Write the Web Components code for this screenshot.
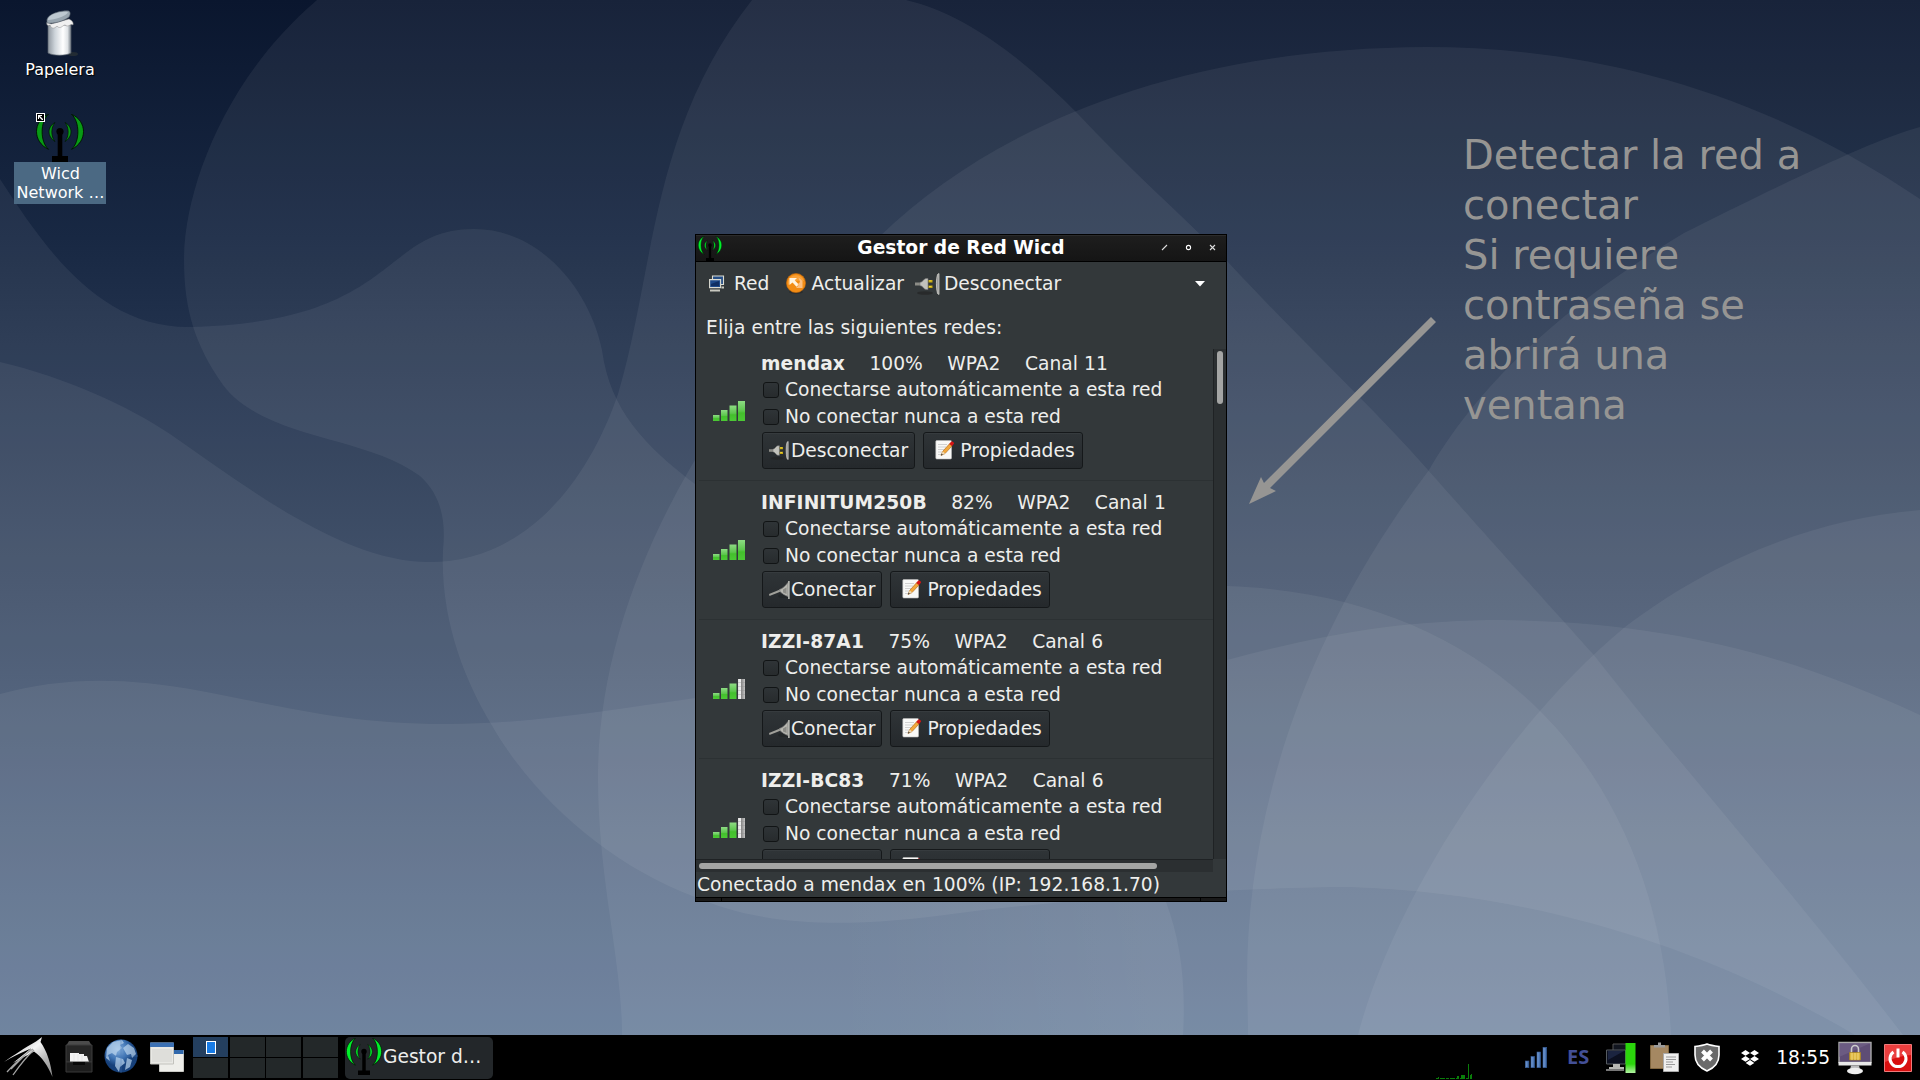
<!DOCTYPE html>
<html lang="es">
<head>
<meta charset="utf-8">
<title>Escritorio</title>
<style>
html,body{margin:0;padding:0;background:#000}
body{width:1920px;height:1080px;overflow:hidden;font-family:"DejaVu Sans",sans-serif;font-size:18.67px}
</style>
</head>
<body>
<desk-top></desk-top>
<script>
const define = (name, html, setup) => {
  const tpl = document.createElement('template');
  tpl.innerHTML = html;
  customElements.define(name, class extends HTMLElement {
    connectedCallback() {
      if (this.shadowRoot) return;
      const root = this.attachShadow({ mode: 'open' });
      root.append(tpl.content.cloneNode(true));
      if (setup) setup(this, root);
    }
  });
};

const antenna = (g) => `<path d="M12.500 .3C-3.500 7 -3.500 28 12.500 35.300C4 28 4 7.500 12.500 .3Z" fill="${g}" stroke="#010" stroke-width=".9"/>
<path d="M35.500 .3C51.500 7 51.500 28 35.500 35.300C44 28 44 7.500 35.500 .3Z" fill="${g}" stroke="#010" stroke-width=".9"/>
<path d="M19 8.500C11 13 11 22.500 19 27.500C14.800 22.500 14.800 13.500 19 8.500ZM29 8.500C37 13 37 22.500 29 27.500C33.200 22.500 33.200 13.500 29 8.500Z" fill="${g}" stroke="#010" stroke-width=".7"/>
<circle cx="24" cy="17.500" r="3.600" fill="#000"/><path d="M21.700 18h4.600v24h5.700v6H16v-6h5.700z" fill="#000"/>`;

const bars = (n) => [[0,14,6.500,6],[8,9,6.500,11],[16.500,4.500,7,15.500],[25,0,7,20]].map((b,i) =>
  `<rect x="${b[0]}" y="${b[1]}" width="${b[2]}" height="${b[3]}" fill="url(#${i<n?'g':'w'})"/>` +
  (i<n ? '' : [3,7,11,15].map(y=>`<path d="M25 ${y+.5}h7" stroke="#888" opacity=".3"/>`).join(''))).join('');
const barDefs = `<defs><linearGradient id="g" x2="0" y2="1"><stop offset="0" stop-color="#8edb84"/><stop offset=".5" stop-color="#5cc64c"/><stop offset=".6" stop-color="#43c02c"/><stop offset="1" stop-color="#4cc935"/></linearGradient>
<linearGradient id="w" x2="1" y2="0"><stop offset="0" stop-color="#ddd"/><stop offset=".35" stop-color="#f2f2f2"/><stop offset=".5" stop-color="#8c8c8c"/><stop offset="1" stop-color="#c4c4c4"/></linearGradient></defs>`;

const ICONS = {
  wicd: [48,48,antenna('#00f02a')],
  wicdDark: [48,48,antenna('#089a14')],
  trash: [34,48,`<defs><linearGradient id="a"><stop offset="0" stop-color="#8f979f"/><stop offset=".3" stop-color="#cdd4da"/><stop offset=".65" stop-color="#fff"/><stop offset=".85" stop-color="#dfe3e6"/><stop offset="1" stop-color="#767e86"/></linearGradient></defs>
    <ellipse cx="27" cy="44" rx="5" ry="2" fill="#222b33"/>
    <path d="M2 15V43C7 46 20 46 25 43V15Z" fill="url(#a)" stroke="#59636d" stroke-width=".7"/>
    <path d="M1 12C0 15 2 16 4 15C6 20 9 18 11 16C14 20 17 15 19 15C23 18 24 13 27 15C28 12 25 10 23 9L5 14Z" fill="#f0f0f0" stroke="#8b8b8b" stroke-width=".5"/>
    <path d="M1 11C0 5 14 0 23 1C25 3 24 5 23 7C18 11 8 14 1 13Z" fill="#98a5af" stroke="#59636d" stroke-width=".6"/><path d="M2 9C3 4 15 1 22 2C21 6 8 10 2 10Z" fill="#bdc8d0"/>`],
  link: [9,9,`<path d="M0 0h9v9H0z" fill="#fff"/><path d="M1 1h7v7H1z" fill="#000"/><path d="M2 2h4v1H4l3 3v1H6L3 4v2H2z" fill="#fff"/>`],
  red: [18,17,`<path d="M5.500 1h11v8.500h-11z" fill="#254e87" stroke="#dcdcd2" stroke-width="1.100"/><path d="M2.600 4.600h11v8h-11z" fill="#1e4a8a" stroke="#dcdcd2" stroke-width="1.100"/><path d="M4 9l8-3v5H4z" fill="#102f63"/><path d="M3 14.500h10v2H3zM14.500 11.500h2.500v2h-2.500z" fill="#c9c9c0"/>`],
  refresh: [20,21,`<ellipse cx="10" cy="19" rx="7" ry="1.800" fill="#222" opacity=".5"/><circle cx="10" cy="10" r="9.600" fill="#f28c14" stroke="#c8690a" stroke-width=".6"/><path d="M2 8A8.500 8.500 0 0 1 18 8Q10 6 2 12z" fill="#ffb052" opacity=".6"/><path d="M3.500 5h7.500l-2.300 2.300 4 4.200-2.200 2.200-4-4.200-3 2.500z" fill="#fff3df"/><path d="M12.500 4.500l4 3.500v7H10l2.500-2.500-1-1L14 9z" fill="#fbbf80"/>`],
  plug: [25,22,`<ellipse cx="10" cy="20" rx="8" ry="1.800" fill="#222" opacity=".6"/><path d="M0 9.500h6v3H0z" fill="#8c8c86"/><path d="M5 9.500C8 9 9 5.500 11 5.500h2v11h-2C9 16.500 8 13 5 12.500z" fill="#c2c2bc" stroke="#777" stroke-width=".6"/><path d="M13.500 7h4v2.500h-4zM13.500 12.500h4v2.500h-4z" fill="#c4a60c"/><path d="M14 7.500h2.500v.8H14zM14 13h2.500v.8H14z" fill="#f4de4f"/><path d="M24 .5v21l-1.500-1C21 15 21 6 22.500 1.500z" fill="#999" stroke="#e0e0d8" stroke-width=".7"/>`],
  plugged: [22,20,`<ellipse cx="15" cy="16" rx="6" ry="2" fill="#1c1f20" opacity=".5"/><path d="M0 14L11 9.500l1.500 1.800L.5 16z" fill="#a0a09a"/><path d="M10.500 9.500C14 8.500 16 6 19 2.500v14C16 15.500 13 13.500 11 11.500z" fill="#b7b7b0" stroke="#777" stroke-width=".7"/><path d="M14 9.500l3.500-2v6.500l-3.500-1.500z" fill="#8c8c87"/><path d="M19.900 1v18" stroke="#e3e3da" stroke-width="1.200"/>`],
  note: [20,20,`<rect x=".8" y=".5" width="15.700" height="18.500" rx="1" fill="#f9f9f7" stroke="#bbb" stroke-width=".6"/><path d="M3 4.500h9M3 7h8M3 9.500h6M3 12h4M3 14.500h3" stroke="#c0c0c0" stroke-width=".7"/><path d="M6 15.500L7.800 11.300 14.500 3.800 17 6 10 13.600z" fill="#f3a83b" stroke="#a86012" stroke-width=".6"/><path d="M6 15.500L7.800 11.300l2.200 2.300z" fill="#edd9b4"/><path d="M14.200 4l2-2.400q2.400-.6 2.900 1.900l-2 2.600z" fill="#d41414"/><path d="M6 15.500l.7-1.900 1.100 1.200z" fill="#222"/>`],
  lxde: [50,42,`<defs><linearGradient id="a" x2="1" y2="1"><stop offset="0" stop-color="#999"/><stop offset=".45" stop-color="#f5f5f5"/><stop offset=".7" stop-color="#b5b5b5"/><stop offset="1" stop-color="#888"/></linearGradient></defs><path d="M0 25C10 18 22 10 32 4.500L38 0 36.500 5C43 14 47 27 48.500 40C44 29 38 20 30 14.500C24 18 16 22 9 26L27 11.500C18 15 8 20 0 25Z" fill="url(#a)"/><path d="M29 12C20 18 11 26 3 35M30 13C23 19 16 28 9 38M27 12L7 32" stroke="#a5a5a5" stroke-width="1.300" fill="none"/>`],
  cabinet: [28,34,`<path d="M4 1h20l3 5H1z" fill="#4b4b4b"/><path d="M1 5h26v17H1z" fill="#262626" stroke="#3d3d3d"/><path d="M5 13h9v1h5v2h3l2 6H5z" fill="#f2f2f2"/><path d="M9 14v7M13 14v7M17 15v6" stroke="#ddd" stroke-width=".6"/><path d="M1 22h26v10H1z" fill="#1c1c1c" stroke="#383838"/><path d="M8 22h12v3H8z" fill="#080808"/>`],
  globe: [34,35,`<defs><radialGradient id="a" cx=".4" cy=".3"><stop offset="0" stop-color="#8bb4e0"/><stop offset=".6" stop-color="#3f74b4"/><stop offset="1" stop-color="#16407a"/></radialGradient></defs><circle cx="17" cy="17" r="16.500" fill="url(#a)"/><path d="M3 9L9 3l9-2 2 3-4 2 2 3-5 4-1 4-4-3-4 2 2 6-4-3zM19 9l5-4 6 4 2 6-4 4-1-4-4 1zM12 18l7 2 2 4-5 4-1 5-4-6zM23 19l5 2-2 7-5 3z" fill="#bcd6ee" opacity=".7"/><path d="M17 0v34M1 17h33" stroke="#4a7ab8" opacity=".4"/>`],
  windows: [34,31,`<path d="M9.500 8.500h24v21h-24z" fill="#eeeeea" stroke="#c9c9c4"/><path d="M10 8h23.500v4H10z" fill="#3168ab"/><path d="M.500 1h23v21H.5z" fill="#e9e9e5" stroke="#c2c2bd"/><path d="M0 .5h24V5H0z" fill="#3b70b3"/><path d="M2 7h20v13H2z" fill="#dededa"/>`],
  sig: [22,21,`<defs><linearGradient id="a"><stop offset="0" stop-color="#7ba3de"/><stop offset="1" stop-color="#38629f"/></linearGradient></defs><g fill="url(#a)" stroke="#355b95" stroke-width=".6"><rect x=".3" y="14" width="3.600" height="6.700"/><rect x="6" y="9.500" width="3.600" height="11.200"/><rect x="12" y="5" width="3.600" height="15.700"/><rect x="18" y=".3" width="3.700" height="20.400"/></g>`],
  net: [30,30,`<defs><linearGradient id="a" x2="0" y2="1"><stop offset="0" stop-color="#2bd50c"/><stop offset=".7" stop-color="#2bd50c"/><stop offset="1" stop-color="#b4f3a4"/></linearGradient></defs><path d="M7 1h14v16H7z" fill="#11151f" stroke="#555"/><path d="M.500 7h19v14H.5z" fill="#0c1020" stroke="#555b60"/><path d="M2 8h16l-16 9z" fill="#1b2440"/><path d="M7 21h7v3h4v3H3v-3h4z" fill="#b7b7b3"/><path d="M0 26h18v2H0z" fill="#777"/><rect x="19.500" y="0" width="10" height="30" fill="url(#a)"/>`],
  clip: [29,31,`<path d="M.500 3.500h18v23H.5z" fill="#a58862" stroke="#80663f"/><path d="M4 5.500V3h4V.500h3V3h4v2.500z" fill="#9b9b9b"/><path d="M13.500 11.500h15v18h-15z" fill="#efefef" stroke="#aaa"/><path d="M16 15h10M16 17.500h10M16 20h7M16 22.500h9M16 25h6" stroke="#999"/>`],
  shield: [26,29,`<path d="M13 1C17 2.500 21 3 25 3.500V12C25 20 20 25 13 28C6 25 1 20 1 12V3.500C5 3 9 2.500 13 1Z" fill="#6a6a6a" stroke="#fff" stroke-width="1.600"/><path d="M8.500 8l9 9M17.500 8l-9 9" stroke="#fff" stroke-width="4"/>`],
  dropbox: [18,16,`<g fill="#fff"><path d="M4.500 0L9 2.900 4.500 5.800 0 2.900zM13.500 0L18 2.900 13.500 5.800 9 2.900zM4.500 6L9 8.900 4.500 11.800 0 8.900zM13.500 6L18 8.900 13.500 11.800 9 8.900zM9 10L13.300 12.900 9 15.800 4.700 12.900z"/></g>`],
  lock: [34,34,`<path d="M1 1.500h32v20H1z" fill="#5e4d75" stroke="#aaa" stroke-width="1.400"/><path d="M1 2h32L1 16z" fill="#75658a" opacity=".6"/><path d="M.500 21h33v3.500H.5z" fill="#e8e8e8"/><path d="M13 24.500h8l1 4H12z" fill="#bbb"/><ellipse cx="17" cy="30" rx="8" ry="3.200" fill="#eee"/><path d="M13.500 12V8a3.500 3.500 0 0 1 7 0v4" fill="none" stroke="#ccc" stroke-width="1.600"/><path d="M11.500 11.500h11v7.500h-11z" fill="#dcb53e" stroke="#a9841c" stroke-width=".7"/><path d="M14 12v7M17 12v7M20 12v7" stroke="#f1d980"/>`],
  power: [28,28,`<path d="M.500.500h27v27H.5z" fill="#d80f0f" stroke="#ef7a7a"/><path d="M1 1h26v10Q14 12 1 18z" fill="#f05050" opacity=".75"/><path d="M9.500 8A8 8 0 1 0 18.500 8" fill="none" stroke="#fff" stroke-width="3"/><path d="M14 4.500v9" stroke="#fff" stroke-width="3"/>`],
  cpu: [36,15,`<path d="M0 14.500h36" stroke="#0a7d0a" stroke-dasharray="3 1 5 1"/><path d="M2 13h1v1H2zM21 12h2v2h-2zM25 11h4v3h-4zM32 0h1v14h-1zM34 11h1v3h-1zM35 10h1v4h-1z" fill="#0a7d0a"/>`],
  bars4: [32,20,barDefs+bars(4)],
  bars3: [32,20,barDefs+bars(3)],
  down: [10,6,`<path d="M0 0h10L5 5.500z" fill="#fff"/>`],
  min: [7,7,`<path d="M1 6L6 1" stroke="#ddd" stroke-width="1.100"/>`],
  max: [7,7,`<circle cx="3.500" cy="3.500" r="2.100" fill="none" stroke="#fff" stroke-width="1.100"/>`],
  close: [7,7,`<path d="M1 1l5 5M6 1L1 6" stroke="#ddd" stroke-width="1.100"/>`],
};

define('ui-icon', `<style>:host{display:block;flex:none}svg{display:block}</style>`, (el, root) => {
  const [w, h, body] = ICONS[el.getAttribute('name')];
  const W = el.getAttribute('w') || w, H = el.getAttribute('h') || h;
  root.innerHTML += `<svg width="${W}" height="${H}" viewBox="0 0 ${w} ${h}" preserveAspectRatio="none">${body}</svg>`;
});

define('wall-paper', `<style>:host{display:block;width:1920px;height:1035px;overflow:hidden}svg{display:block}</style>
<svg width="1920" height="1080" viewBox="0 0 1920 1080"><defs>
<linearGradient id="bg" x2="0" y2="1"><stop offset="0" stop-color="#0a162e"/><stop offset=".22" stop-color="#182843"/><stop offset=".32" stop-color="#22324d"/><stop offset=".56" stop-color="#374863"/><stop offset=".83" stop-color="#4d6281"/><stop offset=".96" stop-color="#556e8f"/><stop offset="1" stop-color="#567092"/></linearGradient>
<linearGradient id="fade" gradientUnits="userSpaceOnUse" x1="830" x2="1150" y1="0" y2="0"><stop offset="0" stop-color="#fff" stop-opacity="0"/><stop offset="1" stop-color="#fff"/></linearGradient></defs>
<rect width="1920" height="1080" fill="url(#bg)"/>
<g fill="#fff" fill-opacity=".058">
<path d="M0 179C46 250 100 328 190 327C400 322 380 229 474 229C540 229 590 290 602 350C610 410 645 446 695 484C860 600 1000 585 1227 586C1500 595 1660 780 1671 1035V1080H0Z"/>
<path d="M317 0C225 78 184 190 184 260C184 310 195 345 223 385C265 440 365 435 420 476C441 495 446 520 443 550C440 620 465 680 491 724C535 800 610 865 695 897C760 925 840 930 960 913C1060 900 1240 887 1350 887C1540 893 1710 950 1855 1035H1920V0Z"/>
<path d="M0 694C60 678 120 676 201 691C290 708 350 724 446 724C530 724 610 710 695 698C900 670 1060 700 1227 660C1320 635 1400 620 1503 620C1680 622 1800 660 1920 715V1080H0Z"/>
<path d="M0 362C65 377 130 407 170 434C250 490 345 562 429 562C520 562 585 490 618 394C655 270 650 130 752 0H906C970 15 1030 65 1078 114C1130 170 1180 213 1228 262C1300 340 1370 404 1428 470C1530 585 1545 600 1593 654C1680 765 1800 900 1903 1035V1080H0Z"/>
<path d="M1920 199C1760 90 1590 47 1426 47C1190 48 1000 120 880 236C750 350 598 560 598 777C598 880 622 960 622 1035V1080H1920Z"/>
<path d="M1920 127C1870 140 1750 200 1684 233C1540 320 1470 400 1429 470C1300 640 1247 820 1247 980L1249 1080H1920Z"/>
<path d="M1920 510C1800 520 1700 570 1625 627C1500 730 1390 910 1358 1035L1348 1080H1920Z"/>
<path d="M830 902H1166C1180 940 1186 980 1183 1035V1080H830Z" fill="url(#fade)"/>
</g></svg>`);

define('desk-icon', `<style>
:host{display:flex;flex-direction:column;align-items:center;font-size:16px;line-height:19px;color:#fff;text-align:center;width:92px}
.pic{position:relative}
.pic ui-icon.l{position:absolute;left:0;top:-1px}
.label{white-space:pre-line;text-shadow:1px 1px 1px #000;padding-top:2px}
:host([icon=trash]) .pic{margin-left:5px}
:host([selected]) .label{background:#4b6983;width:92px;height:42px;box-sizing:border-box;padding:2px 0 0 1px;text-shadow:none}
</style><div class="pic"></div><div class="label"><slot></slot></div>`, (el, root) => {
  root.querySelector('.pic').innerHTML = `<ui-icon name="${el.getAttribute('icon')}"></ui-icon>` + (el.hasAttribute('selected') ? '<ui-icon class="l" name="link"></ui-icon>' : '');
});

define('gtk-button', `<style>
:host{display:flex;align-items:center;box-sizing:border-box;height:37px;border:1px solid #15181a;border-radius:3px;background:linear-gradient(#2f3437,#25292c);padding:0 6px;line-height:22px;white-space:nowrap;box-shadow:inset 0 1px 0 #363b3e}
:host([wide]){padding:0 7px 0 11px}
</style><slot name="icon"></slot><slot></slot>`);

define('gtk-check', `<style>
:host{display:flex;align-items:center;gap:6px;height:26px;line-height:22px;white-space:nowrap;padding-left:1px}
i{width:14px;height:14px;border:1px solid #111415;border-radius:3px;background:linear-gradient(#2f3437,#272b2d)}
</style><i></i><span><slot></slot></span>`);

define('network-row', `<style>
:host{display:grid;grid-template-columns:49px 1fr;height:139px;box-sizing:border-box;border-bottom:1px solid #2c3133;margin-left:3px;padding:11px 0 0 14px;flex:none}
.sig{padding-top:48px}
.col{display:flex;flex-direction:column}
.name{height:22px;line-height:22px;white-space:pre;margin-left:-1px;word-spacing:.2px}
.name b{letter-spacing:.1px}
.checks{display:grid;gap:1px;margin-top:2px}
.btns{display:flex;gap:8px;margin-top:2px}
:host([below-fold]) .btns span{visibility:hidden}
</style><div class="sig"></div><div class="col"><div class="name"></div>
<div class="checks"><gtk-check>Conectarse automáticamente a esta red</gtk-check><gtk-check>No conectar nunca a esta red</gtk-check></div>
<div class="btns"></div></div>`, (el, root) => {
  const a = n => el.getAttribute(n);
  root.querySelector('.sig').innerHTML = `<ui-icon name="bars${a('bars')}"></ui-icon>`;
  root.querySelector('.name').innerHTML = `<b>${a('ssid')}</b>    ${a('level')}    WPA2    ${a('channel')}`;
  const on = el.hasAttribute('connected');
  root.querySelector('.btns').innerHTML = `<gtk-button><ui-icon slot="icon" name="${on?'plug':'plugged'}" w="${on?20:22}" h="${on?19:20}" style="margin-right:${on?2:0}px"></ui-icon><span>${on?'Desconectar':'Conectar'}</span></gtk-button>
  <gtk-button wide><ui-icon slot="icon" name="note" w="20" h="20" style="margin:-1px 5px 0 0"></ui-icon><span>Propiedades</span></gtk-button>`;
});

define('wicd-window', `<style>
:host{display:flex;flex-direction:column;box-sizing:border-box;width:532px;height:668px;border:1px solid #000;background:#33383a;color:#eeeeec;line-height:22px}
header{display:grid;grid-template-columns:130px 1fr 130px;height:27px;box-sizing:border-box;background:linear-gradient(#1e1e1e,#151515);border-bottom:1px solid #000;color:#fff;box-shadow:inset 0 1px 0 #2b2b2b}
header b{text-align:center;line-height:26px;white-space:nowrap}
header .c{display:flex;justify-content:flex-end;gap:17px;align-items:center;padding:0 10px 1px 0}
header ui-icon[name=wicd]{padding:1px 0 0 2px}
.tools{display:flex;align-items:center;height:43px;padding:0 21px 0 12px;white-space:nowrap}
.tools span{display:flex;align-items:center}
.hint{height:44px;padding:12px 0 0 10px;box-sizing:border-box;letter-spacing:.14px}
.mid{display:flex;height:510px}
.list{width:517px;height:510px;overflow:hidden;display:flex;flex-direction:column}
.list network-row:first-child{margin-top:-7px}
.v{flex:1;box-sizing:border-box;border-left:1px solid #1f2224;background:#2b2f31;padding:2px 0 0 3px}
.v i{display:block;width:6px;height:53px;border-radius:3px;background:#a4a5a4}
.h{width:517px;height:13px;box-sizing:border-box;border-top:1px solid #1f2224;background:#2b2f31;padding:3px 0 0 3px}
.h i{display:block;width:458px;height:6px;border-radius:3px;background:#a4a5a4}
.status{height:25px;padding-left:1px;line-height:25px;white-space:nowrap;letter-spacing:.03px}
footer{flex:1;display:grid;grid-template-columns:25px 1fr 25px;gap:1px;background:#000;border-top:1px solid #000}
footer i{background:#191919}
</style>
<header><ui-icon name="wicd" w="24" h="25"></ui-icon><b>Gestor de Red Wicd</b><div class="c"><ui-icon name="min"></ui-icon><ui-icon name="max"></ui-icon><ui-icon name="close"></ui-icon></div></header>
<div class="tools"><span><ui-icon name="red" style="margin:0 9px 0 -1px"></ui-icon>Red</span>
<span style="margin-left:17px"><ui-icon name="refresh" style="margin-right:5px"></ui-icon>Actualizar</span>
<span style="margin-left:11px"><ui-icon name="plug" style="margin-right:4px"></ui-icon>Desconectar</span>
<ui-icon name="down" style="margin-left:auto"></ui-icon></div>
<div class="hint">Elija entre las siguientes redes:</div>
<div class="mid"><div class="list">
<network-row bars="4" ssid="mendax" level="100%" channel="Canal 11" connected></network-row>
<network-row bars="4" ssid="INFINITUM250B" level="82%" channel="Canal 1"></network-row>
<network-row bars="3" ssid="IZZI-87A1" level="75%" channel="Canal 6"></network-row>
<network-row bars="3" ssid="IZZI-BC83" level="71%" channel="Canal 6" below-fold></network-row>
</div><div class="v"><i></i></div></div>
<div class="h"><i></i></div>
<div class="status">Conectado a mendax en 100% (IP: 192.168.1.70)</div>
<footer><i></i><i></i><i></i></footer>`);

define('desk-note', `<style>:host{display:block;color:#969593;font-size:40px;line-height:50px;white-space:pre}</style><slot></slot>`);

define('work-pager', `<style>
:host{display:grid;grid-template-columns:35px 35px 35px 35px;grid-template-rows:20px 20px;gap:1px 1.670px}
i{background:#232829}
i.on{background:#243f5f;display:grid;place-items:center;padding-left:1px;width:34px}
b{width:8px;height:11px;background:#177be6;border:1px solid #fff}
</style><i class="on"><b></b></i><i></i><i></i><i></i><i></i><i></i><i></i><i></i>`);

define('task-bar', `<style>
:host{display:flex;box-sizing:border-box;height:45px;width:1920px;background:#000;color:#eeeeec;align-items:center;padding:0 8px 0 4px}
.task{display:flex;align-items:center;width:148px;height:42px;background:#23272a;border-radius:5px;margin-left:7px;line-height:22px;box-sizing:border-box;padding:0 0 2px 1px;white-space:nowrap}
.tray{margin-left:auto;display:flex;align-items:center}
.es{font:bold 20px "Noto Sans",sans-serif;line-height:24px;color:#434f97;margin-top:-2px}
.clock{color:#fff;line-height:22px}
</style>
<ui-icon name="lxde"></ui-icon>
<ui-icon name="cabinet" style="margin:-2px 0 0 11px"></ui-icon>
<ui-icon name="globe" style="margin:-2px 0 0 11px"></ui-icon>
<ui-icon name="windows" style="margin-left:12px"></ui-icon>
<work-pager style="margin-left:9px"></work-pager>
<div class="task"><ui-icon name="wicd" w="36" h="37" style="margin-right:1px"></ui-icon>Gestor d…</div>
<div class="tray">
<ui-icon name="cpu" style="margin-top:28px"></ui-icon>
<ui-icon name="sig" style="margin-left:53px"></ui-icon>
<span class="es" style="margin-left:20px">ES</span>
<ui-icon name="net" style="margin-left:17px"></ui-icon>
<ui-icon name="clip" style="margin-left:14px"></ui-icon>
<ui-icon name="shield" style="margin-left:15px"></ui-icon>
<ui-icon name="dropbox" style="margin-left:21px"></ui-icon>
<span class="clock" style="margin-left:17px">18:55</span>
<ui-icon name="lock" style="margin-left:8px"></ui-icon>
<ui-icon name="power" style="margin-left:12px"></ui-icon>
</div>`);

define('desk-top', `<style>
:host{display:flex;flex-direction:column;width:1920px;height:1080px;position:relative}
.free{position:absolute}
</style>
<wall-paper></wall-paper>
<desk-icon class="free" icon="trash" style="left:14px;top:10px">Papelera</desk-icon>
<desk-icon class="free" icon="wicdDark" selected style="left:14px;top:114px">Wicd
Network …</desk-icon>
<wicd-window class="free" style="left:695px;top:234px"></wicd-window>
<desk-note class="free" style="left:1463px;top:130px">Detectar la red a
conectar
Si requiere
contraseña se
abrirá una
ventana</desk-note>
<svg class="free" style="left:1240px;top:310px" width="200" height="200" viewBox="1240 310 200 200"><path d="M1431 317L1436 322 1270 488 1276 491 1249 504 1261 477 1264 483Z" fill="#969593"/></svg>
<task-bar></task-bar>`);
</script>
</body>
</html>
